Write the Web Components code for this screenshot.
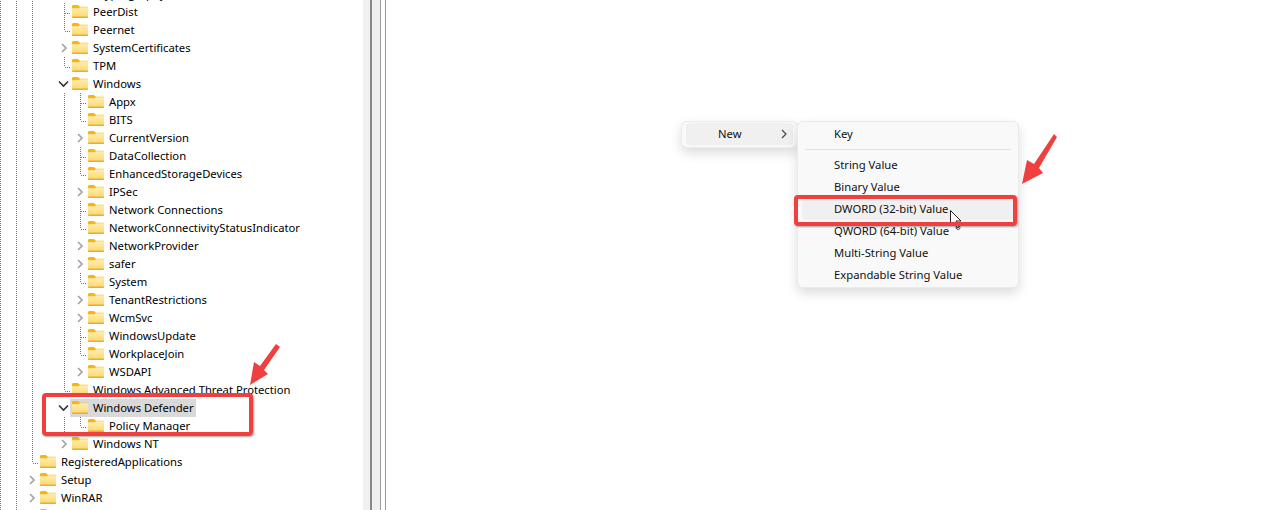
<!DOCTYPE html>
<html>
<head>
<meta charset="utf-8">
<title>Registry Editor</title>
<style>
    html, body { margin: 0; height: 100%; background: #fff; overflow: hidden; }
</style>
</head>
<body>
<regedit-app>
    <tree-view slot="tree">
        <tree-row level="2" state="closed">Cryptography</tree-row>
        <tree-row level="2">PeerDist</tree-row>
        <tree-row level="2">Peernet</tree-row>
        <tree-row level="2" state="closed">SystemCertificates</tree-row>
        <tree-row level="2">TPM</tree-row>
        <tree-row level="2" state="open">Windows</tree-row>
        <tree-row level="3">Appx</tree-row>
        <tree-row level="3">BITS</tree-row>
        <tree-row level="3" state="closed">CurrentVersion</tree-row>
        <tree-row level="3">DataCollection</tree-row>
        <tree-row level="3">EnhancedStorageDevices</tree-row>
        <tree-row level="3" state="closed">IPSec</tree-row>
        <tree-row level="3">Network Connections</tree-row>
        <tree-row level="3">NetworkConnectivityStatusIndicator</tree-row>
        <tree-row level="3" state="closed">NetworkProvider</tree-row>
        <tree-row level="3" state="closed">safer</tree-row>
        <tree-row level="3">System</tree-row>
        <tree-row level="3" state="closed">TenantRestrictions</tree-row>
        <tree-row level="3" state="closed">WcmSvc</tree-row>
        <tree-row level="3">WindowsUpdate</tree-row>
        <tree-row level="3">WorkplaceJoin</tree-row>
        <tree-row level="3" state="closed">WSDAPI</tree-row>
        <tree-row level="2">Windows Advanced Threat Protection</tree-row>
        <tree-row level="2" state="open" selected>Windows Defender</tree-row>
        <tree-row level="3">Policy Manager</tree-row>
        <tree-row level="2" state="closed">Windows NT</tree-row>
        <tree-row level="1">RegisteredApplications</tree-row>
        <tree-row level="1" state="closed">Setup</tree-row>
        <tree-row level="1" state="closed">WinRAR</tree-row>
        <tree-row level="1" state="closed"></tree-row>
    </tree-view>

    <context-menu slot="values" class="parent">
        <menu-item hover arrow indent="32">New</menu-item>
    </context-menu>
    <context-menu slot="values" class="sub">
        <menu-item>Key</menu-item>
        <menu-separator></menu-separator>
        <menu-item>String Value</menu-item>
        <menu-item>Binary Value</menu-item>
        <menu-item hover>DWORD (32-bit) Value</menu-item>
        <menu-item>QWORD (64-bit) Value</menu-item>
        <menu-item>Multi-String Value</menu-item>
        <menu-item>Expandable String Value</menu-item>
    </context-menu>
    <mouse-cursor slot="overlay"></mouse-cursor>
    <red-box slot="overlay" x="42" y="393" w="211" h="43"></red-box>
    <red-box slot="overlay" x="794" y="195" w="223" h="31"></red-box>
    <red-arrow slot="overlay" points="250,385 254,362 260,366 276,344 280,347 264,370 268,374"></red-arrow>
    <red-arrow slot="overlay" points="1022,184 1027,160 1034,164 1054,134 1057,137 1039,168 1043,173"></red-arrow>
</regedit-app>

<script>
const UI_FONT = `"Noto Sans", "Open Sans", sans-serif`;

class RegeditApp extends HTMLElement {
    constructor() {
        super();
        this.attachShadow({mode: "open"});
    }

    connectedCallback() {
        this.shadowRoot.innerHTML = `
        <style>
            :host { display: block; position: relative; width: 1286px; height: 510px; overflow: hidden; font: 11.25px/18px ${UI_FONT}; color: #000; }
            .panes { display: flex; height: 100%; }
            .tree { width: 363px; flex: none; overflow: hidden; }
            .split { display: flex; flex: none; background: #f0f0f0; }
            .split i { display: block; }
            .values { flex: 1; }
        </style>
        <div class="panes">
            <div class="tree"><slot name="tree"></slot></div>
            <div class="split">
                <i style="width:7px"></i>
                <i style="width:2px;background:#888"></i>
                <i style="width:8px"></i>
                <i style="width:1px;background:#9a9a9a"></i>
                <i style="width:4px;background:#fff"></i>
                <i style="width:1px;background:#9a9a9a"></i>
            </div>
            <div class="values"></div>
        </div>
        <slot name="values"></slot>
        <slot name="overlay"></slot>
        `;
    }
}

class TreeView extends HTMLElement {
    constructor() {
        super();
        this.attachShadow({mode: "open"});
    }

    connectedCallback() {
        this.shadowRoot.innerHTML = `
        <style>
            :host { display: block; margin-top: -15px; }
        </style>
        <slot></slot>
        `;
    }
}

const ROW_PADDING = {1: 25, 2: 57, 3: 73};
const OWN_GUIDE = {1: 32, 2: 64, 3: 80};

class TreeRow extends HTMLElement {
    constructor() {
        super();
        this.attachShadow({mode: "open"});
    }

    guides(level, state) {
        const list = [[0, 18], [16, 18]];
        if (level > 1) list.push([32, 18]);
        if (level > 2) list.push([64, 18]);
        if (!state) {
            const next = this.nextElementSibling;
            const nextLevel = next ? Number(next.getAttribute("level")) : 0;
            const half = nextLevel < level || (nextLevel === level && next.hasAttribute("state"));
            list.push([OWN_GUIDE[level], half ? 10 : 18]);
        }
        return list;
    }

    connectedCallback() {
        const level = Number(this.getAttribute("level"));
        const state = this.getAttribute("state");
        const dots = "repeating-linear-gradient(#777 0 1px, transparent 1px 2px)";
        const guides = this.guides(level, state);
        const bg = guides.map(([x, h]) => `${dots} ${x}px 0 / 1px ${h}px no-repeat`).join(", ");

        let marker = `<i class="stub"></i>`;
        if (state === "closed") {
            marker = `<svg width="13" height="10" viewBox="0 0 13 10"><path d="M5 1l4 4-4 4" fill="none" stroke="#a0a0a0" stroke-width="1.6"/></svg>`;
        } else if (state === "open") {
            marker = `<svg width="13" height="10" viewBox="0 0 13 10"><path d="M2 2.5l4.5 4.5L11 2.5" fill="none" stroke="#333" stroke-width="1.6"/></svg>`;
        }

        this.shadowRoot.innerHTML = `
        <style>
            :host { display: flex; align-items: stretch; height: 18px; padding-left: ${ROW_PADDING[level]}px; background: ${bg}; white-space: nowrap; }
            .marker { width: 13px; flex: none; display: flex; align-items: center; }
            .stub { display: block; width: 6px; height: 1px; margin: 2px 0 0 8px; background: repeating-linear-gradient(90deg, #777 0 1px, transparent 1px 2px); }
            .label { display: flex; align-items: center; gap: 5px; padding: 0 2px; }
            :host([selected]) .label { background: #d9d9d9; }
            svg { display: block; }
            .folder { margin-top: -1px; }
        </style>
        <span class="marker">${marker}</span>
        <span class="label">
            <svg class="folder" width="16" height="13" viewBox="0 0 16 14" preserveAspectRatio="none">
                <defs>
                    <linearGradient id="body" x1="0" y1="0" x2="0" y2="1">
                        <stop offset="0" stop-color="#ffeeb0"/>
                        <stop offset="1" stop-color="#fcd670"/>
                    </linearGradient>
                </defs>
                <path d="M0 1.5C0 .7.6 0 1.4 0h4.4L8 2h6.6c.8 0 1.4.6 1.4 1.4V5H0z" fill="#f6b60e"/>
                <path d="M0 3.5h6.6L8.2 2.4H16v10.2c0 .8-.6 1.4-1.4 1.4H1.4C.6 14 0 13.4 0 12.6z" fill="url(#body)"/>
                <path d="M0 12.5v.1c0 .8.6 1.4 1.4 1.4h13.2c.8 0 1.4-.6 1.4-1.4v-.1z" fill="#eaae2c"/>
            </svg>
            <span><slot></slot></span>
        </span>
        `;
    }
}

class ContextMenu extends HTMLElement {
    constructor() {
        super();
        this.attachShadow({mode: "open"});
    }

    connectedCallback() {
        this.shadowRoot.innerHTML = `
        <style>
            :host { display: block; position: absolute; top: 121px; box-sizing: border-box; padding: 1px 4px; background: #f9f9f9; border: 1px solid #ebebeb; border-radius: 6px; box-shadow: 0 5px 12px rgba(0, 0, 0, .14); color: #111; }
            :host(.parent) { left: 681px; width: 117px; height: 27px; }
            :host(.sub) { left: 797px; width: 222px; height: 167px; }
        </style>
        <slot></slot>
        `;
    }
}

class MenuItem extends HTMLElement {
    constructor() {
        super();
        this.attachShadow({mode: "open"});
    }

    connectedCallback() {
        const indent = this.getAttribute("indent") || 32;
        const arrow = this.hasAttribute("arrow")
            ? `<svg width="6" height="10" viewBox="0 0 6 10"><path d="M1 1l4 4-4 4" fill="none" stroke="#444" stroke-width="1.2"/></svg>`
            : "";
        this.shadowRoot.innerHTML = `
        <style>
            :host { display: flex; align-items: center; justify-content: space-between; height: 22px; padding: 0 6px 0 ${indent}px; border-radius: 4px; }
            :host([hover]) { background: #f0f0f0; }
        </style>
        <span><slot></slot></span>${arrow}
        `;
    }
}

class MenuSeparator extends HTMLElement {
    constructor() {
        super();
        this.attachShadow({mode: "open"});
    }

    connectedCallback() {
        this.shadowRoot.innerHTML = `
        <style>
            :host { display: block; height: 1px; margin: 4px 3px; background: #e2e2e2; }
        </style>
        `;
    }
}

class RedBox extends HTMLElement {
    constructor() {
        super();
        this.attachShadow({mode: "open"});
    }

    connectedCallback() {
        const [x, y, w, h] = ["x", "y", "w", "h"].map(a => this.getAttribute(a));
        this.shadowRoot.innerHTML = `
        <style>
            :host { display: block; position: absolute; left: ${x}px; top: ${y}px; width: ${w}px; height: ${h}px; box-sizing: border-box; border: 4px solid #ef3f3f; border-radius: 4px; box-shadow: 1px 1px 2px rgba(0, 0, 0, .35); }
        </style>
        `;
    }
}

class RedArrow extends HTMLElement {
    constructor() {
        super();
        this.attachShadow({mode: "open"});
    }

    connectedCallback() {
        this.shadowRoot.innerHTML = `
        <style>
            :host { display: block; position: absolute; left: 0; top: 0; pointer-events: none; }
            svg { display: block; }
        </style>
        <svg width="1286" height="510"><polygon points="${this.getAttribute("points")}" fill="#ef3f3f"/></svg>
        `;
    }
}

class MouseCursor extends HTMLElement {
    constructor() {
        super();
        this.attachShadow({mode: "open"});
    }

    connectedCallback() {
        this.shadowRoot.innerHTML = `
        <style>
            :host { display: block; position: absolute; left: 949px; top: 209px; }
            svg { display: block; }
        </style>
        <svg width="16" height="24" viewBox="0 0 16 24">
            <path d="M1.5 1.5v15l3.5-3.5 3 6 2-1-3-6h5z" fill="#fff" stroke="#222" stroke-width="1"/>
            <circle cx="9" cy="18.5" r="2" fill="none" stroke="#555" stroke-width="1"/>
        </svg>
        `;
    }
}

customElements.define("regedit-app", RegeditApp);
customElements.define("tree-view", TreeView);
customElements.define("tree-row", TreeRow);
customElements.define("context-menu", ContextMenu);
customElements.define("menu-item", MenuItem);
customElements.define("menu-separator", MenuSeparator);
customElements.define("red-box", RedBox);
customElements.define("red-arrow", RedArrow);
customElements.define("mouse-cursor", MouseCursor);
</script>
</body>
</html>
